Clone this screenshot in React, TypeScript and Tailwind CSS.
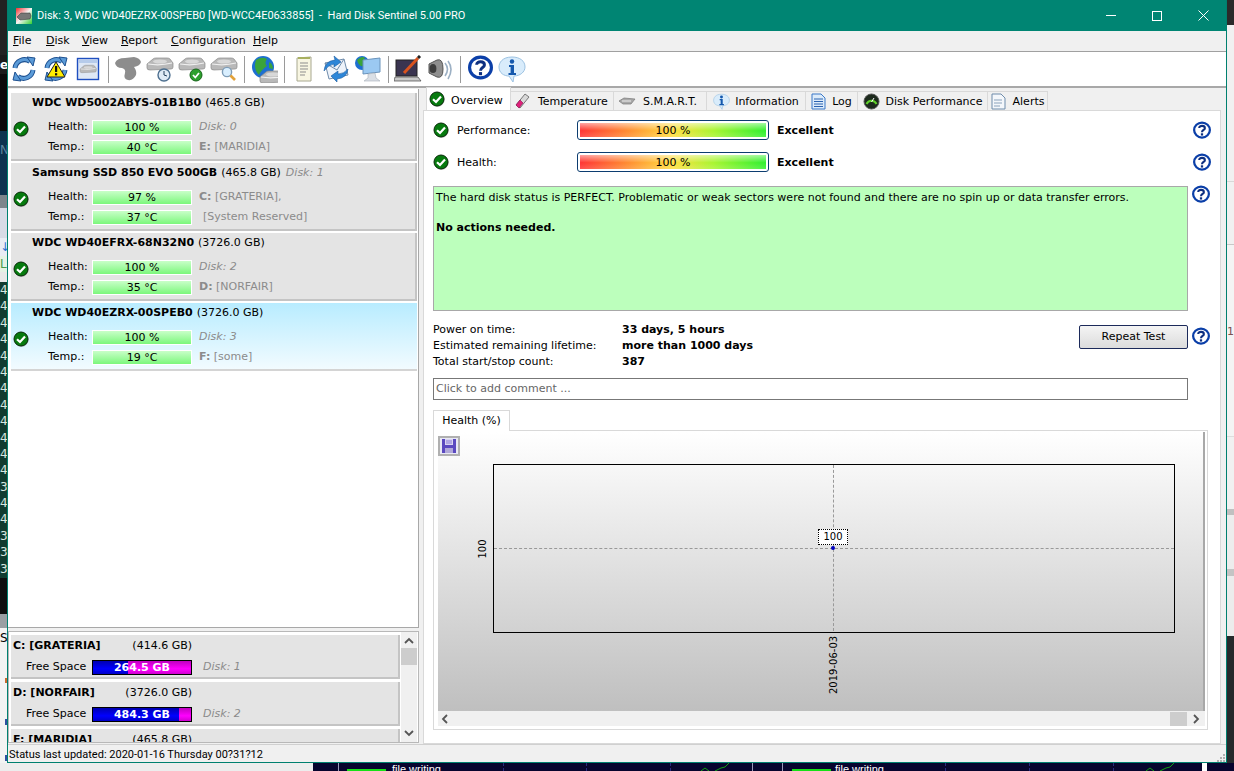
import React from "react";

// small icons
function Check({ size = 16 }: { size?: number }) {
  return (
    <svg width={size} height={size} viewBox="0 0 16 16" className="shrink-0">
      <circle cx="8.6" cy="8.8" r="7" fill="#00000040" />
      <circle cx="8" cy="8" r="7" fill="#067a0e" stroke="#062a08" strokeWidth="1" />
      <path d="M4 8.2 L7 11 L12 5.4" fill="none" stroke="#fff" strokeWidth="2.2" />
    </svg>
  );
}

function Help({ size = 18 }: { size?: number }) {
  return (
    <svg width={size} height={size} viewBox="0 0 24 24" className="shrink-0">
      <ellipse cx="12" cy="12" rx="10.5" ry="10" fill="#fff" stroke="#0b3fa8" strokeWidth="3" />
      <path d="M8.3 9.3 C8.3 5.6 15.8 5.6 15.8 9.5 C15.8 12 12 12 12 15" fill="none" stroke="#0d2f80" strokeWidth="2.8" />
      <rect x="10.5" y="16.4" width="3" height="3" fill="#0d2f80" />
    </svg>
  );
}

function Arcs({ dark = "#1c4f8f", light = "#5b9bd8" }: { dark?: string; light?: string }) {
  return (
    <g fill="none">
      <path d="M5 13 A9.5 9.5 0 0 1 20 6.5" stroke={dark} strokeWidth="5" />
      <path d="M23 15 A9.5 9.5 0 0 1 8 21.5" stroke={dark} strokeWidth="5" />
      <path d="M5 13 A9.5 9.5 0 0 1 20 6.5" stroke={light} strokeWidth="3" />
      <path d="M23 15 A9.5 9.5 0 0 1 8 21.5" stroke={light} strokeWidth="3" />
      <path d="M17 2 L25 3 L23 11 Z" fill={light} stroke={dark} />
      <path d="M11 26 L3 25 L5 17 Z" fill={light} stroke={dark} />
    </g>
  );
}

function GrayDisk({ y = 0, x = 0 }: { y?: number; x?: number }) {
  return (
    <g transform={`translate(${x} ${y})`}>
      <path d="M1 8 L7 3 Q8 2 10 2 L21 2 Q23 2 24 3 L27 7 L27 11 Q27 13 25 13 L4 14 Q1 14 1 12 Z" fill="#b9b9b9" stroke="#8a8a8a" strokeWidth="0.7" />
      <path d="M2 8 Q14 10 26 7" fill="none" stroke="#f0f0f0" strokeWidth="1.2" />
      <ellipse cx="14" cy="5.5" rx="7" ry="2" fill="#d8d8d8" />
    </g>
  );
}

function ToolIcon({ name }: { name: string }) {
  let body: React.ReactNode = null;
  if (name === "refresh") body = <Arcs />;
  if (name === "warn")
    body = (
      <>
        <Arcs />
        <path d="M14 7 L23 22 L5 22 Z" fill="#ffee00" stroke="#222" strokeWidth="1" />
        <rect x="13" y="11" width="2.2" height="6" fill="#111" />
        <rect x="13" y="18.2" width="2.2" height="2.2" fill="#111" />
      </>
    );
  if (name === "disk")
    body = (
      <>
        <rect x="3.5" y="3.5" width="21" height="21" fill="#dfe8f5" stroke="#1f4fc0" strokeWidth="1.4" />
        <rect x="5" y="5" width="18" height="3" fill="#b6cbea" />
        <g transform="translate(5.5 9) scale(0.62)">
          <GrayDisk />
        </g>
      </>
    );
  if (name === "blob")
    body = <path d="M1 8 Q3 3 11 3 L20 2 Q26 3 27 7 Q26 11 20 12 Q23 16 22 20 Q19 26 14 25 Q9 24 11 18 Q12 14 8 13 Q2 13 1 8 Z" fill="#8d8d8d" />;
  if (name === "clock")
    body = (
      <>
        <GrayDisk y={1} />
        <circle cx="18" cy="20" r="6" fill="#dfeaf5" stroke="#4d6f8f" strokeWidth="1.4" />
        <path d="M18 16 L18 20 L21 21" fill="none" stroke="#24405c" />
      </>
    );
  if (name === "okdisk")
    body = (
      <>
        <GrayDisk y={1} />
        <circle cx="18" cy="20" r="6" fill="#2ca02c" stroke="#17641a" />
        <path d="M15 20 L17.3 22.5 L21 18" fill="none" stroke="#fff" strokeWidth="1.8" />
      </>
    );
  if (name === "search")
    body = (
      <>
        <GrayDisk y={1} />
        <circle cx="17" cy="17" r="4.6" fill="#d9efff" stroke="#7e9db8" strokeWidth="1.4" />
        <path d="M20.5 20.5 L25 25" stroke="#e2a23a" strokeWidth="2.6" />
      </>
    );
  if (name === "globe")
    body = (
      <>
        <circle cx="13" cy="12" r="11" fill="#1d6fd0" />
        <path d="M6 5 Q12 1 17 4 Q14 8 17 11 Q11 15 9 20 Q3 14 6 5 Z" fill="#3aa43a" />
        <path d="M19 7 Q23 9 23 14 L19 13 Z" fill="#3aa43a" />
        <GrayDisk x={9} y={14} />
      </>
    );
  if (name === "note")
    body = (
      <>
        <path d="M7 3 L21 2 L21 26 L7 26 Z" fill="#f8f6e2" stroke="#a8a890" />
        <rect x="8" y="2" width="12" height="2" fill="#a8b060" />
        <path d="M10 8 H18 M10 11 H18 M10 14 H18 M10 17 H16 M10 20 H15" stroke="#8d8d8d" strokeWidth="1" />
      </>
    );
  if (name === "mail")
    body = (
      <>
        <path d="M3 8 L22 4 L26 20 L7 24 Z" fill="#eef3fa" stroke="#6f8cab" />
        <path d="M3 8 L15 15 L22 4" fill="none" stroke="#6f8cab" />
        <path d="M2 16 Q3 6 13 5 L12 1 L19 7 L12 12 L12 9 Q6 10 2 16 Z" fill="#2d86d8" stroke="#1a5a9f" strokeWidth="0.6" />
        <path d="M26 14 Q25 23 15 24 L15 27 L9 21 L16 16 L16 19 Q22 19 26 14 Z" fill="#2d86d8" stroke="#1a5a9f" strokeWidth="0.6" />
      </>
    );
  if (name === "net")
    body = (
      <>
        <circle cx="8" cy="8" r="7" fill="#1d6fd0" />
        <path d="M3 5 Q8 0 11 3 Q8 7 9 11 Q5 12 3 5 Z" fill="#3aa43a" />
        <path d="M9 5 L26 3 L26 17 L9 19 Z" fill="#9bc9f2" stroke="#6a93bb" />
        <path d="M14 19 L21 18 L22 23 L26 26 L10 26 L14 23 Z" fill="#dadfe5" stroke="#a8b0b8" strokeWidth="0.6" />
      </>
    );
  if (name === "monitor")
    body = (
      <>
        <rect x="2" y="5" width="21" height="16" fill="#3a3450" stroke="#222" />
        <path d="M1 22 L24 22 L27 26 L0 26 Z" fill="#c9c9c9" stroke="#444" strokeWidth="0.7" />
        <path d="M10 18 L24 3" stroke="#d9531e" strokeWidth="3" />
        <path d="M24 3 L26 1" stroke="#222" strokeWidth="3" />
      </>
    );
  if (name === "speaker")
    body = (
      <>
        <path d="M3 9 L11 5 Q17 3 17 14 Q17 24 11 22 L3 18 Z" fill="#8f8f8f" stroke="#555" />
        <ellipse cx="7" cy="13.5" rx="3.4" ry="4.6" fill="#3e3e3e" />
        <path d="M19 8 Q24 14 19 21 M22 6 Q28 14 22 24" fill="none" stroke="#9cb0c4" strokeWidth="1.6" />
      </>
    );
  if (name === "help") return <Help size={25} />;
  if (name === "info")
    body = (
      <>
        <path d="M14 2 C4 2 1 8 1 12 C1 18 6 21 11 21 L15 27 L16 21 C22 21 27 17 27 12 C27 6 22 2 14 2 Z" fill="#d9ecfb" stroke="#9cc2e2" />
        <circle cx="14" cy="6.5" r="2.2" fill="#1458ad" />
        <path d="M11 10 H16 V18 H18 V20 H10.5 V18 H12.6 V12 H11 Z" fill="#1458ad" />
      </>
    );
  return (
    <svg width="28" height="28" viewBox="0 0 28 28" className="shrink-0">
      {body}
    </svg>
  );
}

function TabIcon({ name }: { name: string }) {
  if (name === "temp")
    return (
      <svg width="18" height="18" viewBox="0 0 18 18">
        <path d="M3 13 L12 2 L16 5 L7 16 Z" fill="#d8d8d8" stroke="#777" />
        <path d="M3 13 L7 8 L10 11 L6 16 Z" fill="#e0207a" stroke="#8a1050" strokeWidth="0.6" />
      </svg>
    );
  if (name === "smart")
    return (
      <svg width="18" height="12" viewBox="0 0 18 12">
        <path d="M1 6 L6 3 L17 4 L13 9 L5 9 Z" fill="#a8a8a8" stroke="#777" strokeWidth="0.7" />
        <path d="M4 6 L13 6" stroke="#eee" />
      </svg>
    );
  if (name === "info")
    return (
      <svg width="17" height="17" viewBox="0 0 28 28">
        <path d="M14 2 C4 2 1 8 1 12 C1 18 6 21 11 21 L15 27 L16 21 C22 21 27 17 27 12 C27 6 22 2 14 2 Z" fill="#d9ecfb" stroke="#9cc2e2" />
        <circle cx="14" cy="6.5" r="2.4" fill="#1458ad" />
        <path d="M11 10 H16 V18 H18 V20 H10.5 V18 H12.6 V12 H11 Z" fill="#1458ad" />
      </svg>
    );
  if (name === "log")
    return (
      <svg width="15" height="17" viewBox="0 0 15 17">
        <path d="M1 1 H10 L14 5 V16 H1 Z" fill="#dcebfa" stroke="#3a78c8" />
        <path d="M3 6 H12 M3 8.5 H12 M3 11 H12 M3 13.5 H12" stroke="#2a62b0" />
      </svg>
    );
  if (name === "perf")
    return (
      <svg width="17" height="17" viewBox="0 0 17 17">
        <circle cx="8.5" cy="8.5" r="7.5" fill="#1d2a1d" stroke="#555" />
        <path d="M3.5 11 A5.5 5.5 0 0 1 13.5 11" fill="none" stroke="#5fd02a" strokeWidth="2" />
        <path d="M8.5 9 L11 5" stroke="#fff" />
      </svg>
    );
  if (name === "alerts")
    return (
      <svg width="15" height="17" viewBox="0 0 15 17">
        <path d="M1 1 H10 L14 5 V16 H1 Z" fill="#f4f7fb" stroke="#6f8cab" />
        <path d="M3 7 H11 M3 10 H11 M3 13 H9" stroke="#8aa2bb" />
      </svg>
    );
  return null;
}

type DiskInfo = {
  name: string;
  size: string;
  health: string;
  temp: string;
  healthNote: React.ReactNode;
  tempNote: React.ReactNode;
  nameNote?: string;
  selected?: boolean;
};

const muted = "text-[#8b8b8b]";

const disks: DiskInfo[] = [
  {
    name: "WDC WD5002ABYS-01B1B0",
    size: "(465.8 GB)",
    health: "100 %",
    temp: "40 °C",
    healthNote: <span className={`italic ${muted}`}>Disk: 0</span>,
    tempNote: (
      <span className={muted}>
        <b>E:</b> [MARIDIA]
      </span>
    ),
  },
  {
    name: "Samsung SSD 850 EVO 500GB",
    size: "(465.8 GB)",
    nameNote: "Disk: 1",
    health: "97 %",
    temp: "37 °C",
    healthNote: (
      <span className={muted}>
        <b>C:</b> [GRATERIA],
      </span>
    ),
    tempNote: <span className={`ml-1 ${muted}`}>[System Reserved]</span>,
  },
  {
    name: "WDC WD40EFRX-68N32N0",
    size: "(3726.0 GB)",
    health: "100 %",
    temp: "35 °C",
    healthNote: <span className={`italic ${muted}`}>Disk: 2</span>,
    tempNote: (
      <span className={muted}>
        <b>D:</b> [NORFAIR]
      </span>
    ),
  },
  {
    name: "WDC WD40EZRX-00SPEB0",
    size: "(3726.0 GB)",
    health: "100 %",
    temp: "19 °C",
    selected: true,
    healthNote: <span className={`italic ${muted}`}>Disk: 3</span>,
    tempNote: (
      <span className={muted}>
        <b>F:</b> [some]
      </span>
    ),
  },
];

function MiniBar({ text }: { text: string }) {
  return (
    <div className="flex h-[15px] w-[100px] items-center justify-center border border-white bg-[linear-gradient(to_bottom,#c8ffc8,#7cf77c)] leading-none">
      {text}
    </div>
  );
}

function DiskCard({ d }: { d: DiskInfo }) {
  return (
    <div
      className={
        d.selected
          ? "flex h-[68px] flex-col border-b-2 border-[#d4d4d4] bg-[linear-gradient(to_bottom,#b8ecff,#f2fbff)]"
          : "flex h-[68px] flex-col border-r-2 border-b-2 border-[#c4c4c4] bg-[#e4e4e4]"
      }
    >
      <div className="flex h-[21px] items-center pl-[21px] whitespace-nowrap">
        <b>{d.name}</b>
        <span className="ml-[4px]">{d.size}</span>
        {d.nameNote && <span className={`ml-[5px] italic ${muted}`}>{d.nameNote}</span>}
      </div>
      <div className="mt-[3px] flex">
        <div className="mt-[4px] ml-[2px] w-[35px]">
          <Check />
        </div>
        <div className="flex flex-col">
          <div className="flex h-[20px] items-center">
            <span className="w-[44px]">Health:</span>
            <MiniBar text={d.health} />
            <span className="ml-[7px]">{d.healthNote}</span>
          </div>
          <div className="flex h-[20px] items-center">
            <span className="w-[44px]">Temp.:</span>
            <MiniBar text={d.temp} />
            <span className="ml-[7px]">{d.tempNote}</span>
          </div>
        </div>
      </div>
    </div>
  );
}

function Volume({ name, size, free, disk, blue }: { name: string; size: string; free?: string; disk?: string; blue?: number }) {
  return (
    <div className="mb-[3px] flex h-[44px] shrink-0 flex-col border-r-2 border-b-2 border-[#c4c4c4] bg-[#e4e4e4]">
      <div className="flex h-[22px] w-[181px] items-center justify-between pl-[2px] whitespace-nowrap">
        <b>{name}</b>
        <span>{size}</span>
      </div>
      {free && (
        <div className="flex h-[20px] items-center pl-[15px]">
          <span className="w-[66px] whitespace-nowrap">Free Space</span>
          <div className="relative flex h-[15px] w-[100px] border border-black bg-[linear-gradient(to_bottom,#c000c0,#ff00ff_60%,#d000d0)]">
            <div className="h-full bg-[linear-gradient(to_bottom,#0000b0,#0000ff_60%,#0000c8)]" style={{ width: blue }} />
            <span className="absolute inset-0 flex items-center justify-center font-bold leading-none text-white">{free}</span>
          </div>
          <span className={`ml-[11px] italic ${muted}`}>{disk}</span>
        </div>
      )}
    </div>
  );
}

function GaugeRow({ label }: { label: string }) {
  return (
    <div className="flex h-[20px] items-center">
      <div className="flex w-[144px] items-center gap-[8px]">
        <Check />
        <span className="pt-[3px]">{label}</span>
      </div>
      <div className="h-[20px] w-[192px] rounded-[3px] border border-[#0c3d70] bg-white p-[2px]">
        <div className="flex h-full items-center justify-center bg-[linear-gradient(to_bottom,rgba(255,255,255,0.55),rgba(255,255,255,0)_55%,rgba(255,255,255,0.15)),linear-gradient(to_right,#ff3434,#ff8a30_25%,#ffe040_50%,#a8f530_72%,#30f030)] leading-none">
          100 %
        </div>
      </div>
      <b className="ml-[8px] pt-[2px]">Excellent</b>
      <div className="mr-[9px] ml-auto">
        <Help />
      </div>
    </div>
  );
}

const tabs = [
  { label: "Temperature", icon: "temp", cls: "w-[103px] justify-start gap-[7px] pl-[2px]" },
  { label: "S.M.A.R.T.", icon: "smart", cls: "w-[93px] justify-start gap-[7px] pl-[4px]" },
  { label: "Information", icon: "info", cls: "w-[99px] justify-center gap-[5px]" },
  { label: "Log", icon: "log", cls: "w-[52px] justify-center gap-[6px]" },
  { label: "Disk Performance", icon: "perf", cls: "w-[130px] justify-center gap-[6px]" },
  { label: "Alerts", icon: "alerts", cls: "w-[60px] justify-center gap-[7px]" },
];

const menu = [
  ["F", "ile", "w-[33px]"],
  ["D", "isk", "w-[36px]"],
  ["V", "iew", "w-[39px]"],
  ["R", "eport", "w-[50px]"],
  ["C", "onfiguration", "w-[82px]"],
  ["H", "elp", "w-[40px]"],
];

const toolbar = [
  ["refresh", "warn", "disk"],
  ["blob", "clock", "okdisk", "search"],
  ["globe"],
  ["note", "mail", "net"],
  ["monitor", "speaker"],
  ["help", "info"],
];

const leftBand = ["4", "4", "4", "4", "4", "4", "4", "4", "4", "4", "4", "4", "3", "4", "4", "3", "3", "3"];

function LeftStrip() {
  return (
    <div className="flex h-full w-[7px] shrink-0 flex-col overflow-hidden text-[12px] text-white">
      <div className="h-[55px] bg-[#222222]" />
      <div className="flex h-[19px] items-center bg-[#1b1b1b] font-bold">e</div>
      <div className="h-[57px] bg-[#0b0b0b]" />
      <div className="h-[64px] bg-[#0d3350] pt-[11px] leading-[16px] text-[#5f87a0]">N</div>
      <div className="h-[13px] bg-[#7d868c]" />
      <div className="h-[30px] bg-[#d8dbe6]" />
      <div className="flex h-[18px] items-center bg-[#e8ecf4] text-[#2a72d0]">↓</div>
      <div className="flex h-[16px] items-center bg-[#e4f2e4] text-[#4a9a4a]">L</div>
      <div className="h-[10px] bg-[#e8e8e8]" />
      <div className="flex h-[296px] flex-col bg-[#123c30] text-[#d8e8e0]">
        {leftBand.map((n, i) => (
          <span key={i} className="h-[16.4px] leading-[16px]">
            {n}
          </span>
        ))}
      </div>
      <div className="h-[36px] bg-[#0e0e0e]" />
      <div className="h-[14px] bg-[#9a9fa3]" />
      <div className="flex h-[20px] items-center bg-[#f3f3f3] text-black">S</div>
      <div className="flex flex-1 flex-col items-end bg-[#f3f3f3]">
        <div className="mt-[30px] h-[5px] w-[2px] bg-[#c86a30]" />
        <div className="mt-[36px] h-[6px] w-[2px] bg-[#3050a0]" />
        <div className="mt-[30px] h-[6px] w-[2px] bg-[#3050a0]" />
      </div>
    </div>
  );
}

function RightStrip() {
  return (
    <div className="flex h-full w-[7px] shrink-0 flex-col overflow-hidden">
      <div className="h-[25px] bg-[#2a2a2a]" />
      <div className="h-[157px] border-b border-[#d8d8d8] bg-[#f1f1f1]" />
      <div className="h-[63px] border-b border-[#c8c8c8] bg-[#f1f1f1]" />
      <div className="h-[192px] border-b border-[#dddddd] bg-[#f4f4f4] pt-[81px] text-[11px] leading-[12px] text-[#7a5050]">1</div>
      <div className="h-[72px] bg-[#f1f1f1]" />
      <div className="h-[6px] bg-[#c0c0c0]" />
      <div className="h-[54px] bg-[#ededed]" />
      <div className="h-[7px] bg-[#c4c4c4]" />
      <div className="h-[60px] bg-[#ececec]" />
      <div className="flex-1 bg-[#252a2c]" />
    </div>
  );
}

function BottomStrip() {
  return (
    <div className="flex h-[8px] shrink-0 overflow-hidden font-['Liberation_Sans',sans-serif] text-[11px] leading-[11px] text-white">
      <div className="w-[313px] shrink-0 bg-[#ededed]" />
      <div className="flex flex-1 items-start bg-[#07042e]">
        <div className="ml-[25px] h-full w-[1px] bg-[#9a9ab8]" />
        <div className="mt-[6px] ml-[8px] h-[2px] w-[39px] bg-[#16e016]" />
        <span className="mt-[1px] ml-[6px] w-[45px] whitespace-nowrap">file writing</span>
        <div className="ml-[66px] h-full border-l border-dashed border-[#2a2a80]" />
        <div className="ml-[82px] h-full border-l border-dashed border-[#2a2a80]" />
        <div className="ml-[83px] h-full border-l border-dashed border-[#2a2a80]" />
        <svg width="30" height="8" viewBox="0 0 30 8" className="ml-[30px] shrink-0">
          <path d="M0 8 L4 5 L8 8 M14 8 L20 5 L24 4 L28 0" fill="none" stroke="#12a012" />
        </svg>
        <div className="ml-[21px] h-full w-[1px] bg-[#9a9ab8]" />
        <div className="ml-[29px] h-full w-[1px] bg-[#9a9ab8]" />
        <div className="mt-[6px] ml-[9px] h-[2px] w-[39px] bg-[#16e016]" />
        <span className="mt-[1px] ml-[4px] w-[45px] whitespace-nowrap">file writing</span>
        <div className="ml-[65px] h-full border-l border-dashed border-[#2a2a80]" />
        <div className="ml-[83px] h-full border-l border-dashed border-[#2a2a80]" />
        <div className="ml-[83px] h-full border-l border-dashed border-[#2a2a80]" />
        <svg width="30" height="8" viewBox="0 0 30 8" className="ml-[32px] shrink-0">
          <path d="M0 8 L4 5 L8 8 M14 8 L20 5 L24 4 L28 0" fill="none" stroke="#12a012" />
        </svg>
        <div className="ml-[26px] h-full w-[5px] bg-white" />
      </div>
    </div>
  );
}

function Chart() {
  return (
    <div className="flex flex-col">
      <div className="flex h-[20px]">
        <div className="z-10 flex h-[21px] w-[77px] items-center justify-center border border-b-0 border-[#d9d9d9] bg-white">
          Health (%)
        </div>
      </div>
      <div className="flex h-[300px] w-[775px] flex-col border border-[#d9d9d9] bg-white pt-[1px] pr-[2px] pb-[3px] pl-[4px]">
        <div className="relative h-[280px] border-r-2 border-[#a8a8a8] bg-[linear-gradient(to_bottom,#ffffff,#bfbfbf)] pt-[4px]">
          <div className="flex h-[20px] w-[22px] items-center justify-center border-2 border-[#b0b0b0] bg-[#e8e8f4]">
            <svg width="16" height="16" viewBox="0 0 16 16">
              <path d="M1 1 H15 V15 H1 Z" fill="#5a48c0" />
              <rect x="4" y="1" width="8" height="6" fill="#d8d4f0" />
              <path d="M5 3 H11 M5 5 H11" stroke="#8878d8" />
              <rect x="4" y="10" width="8" height="5" fill="#b0a8d8" />
            </svg>
          </div>
          <div className="mt-[8px] ml-[55px] h-[169px] w-[682px] border border-black" />
          {/* lines, point and labels sit over the plot */}
          <div className="absolute top-[33px] bottom-[80px] left-[395px] border-l border-dashed border-[#999999]" />
          <div className="absolute top-[116px] left-[56px] w-[680px] border-t border-dashed border-[#999999]" />
          <div className="absolute top-[114px] left-[393px] h-[4px] w-[4px] rounded-full bg-[#0000c0]" />
          <div className="absolute top-[97px] left-[380px] flex h-[16px] w-[30px] items-center justify-center border border-dotted border-black bg-white text-[10px] leading-none">
            100
          </div>
          <span className="absolute top-[112px] left-[34px] w-[22px] -rotate-90 text-center text-[10px] leading-none">100</span>
          <span className="absolute top-[229px] left-[368px] w-[56px] -rotate-90 text-center text-[10px] leading-none whitespace-nowrap">2019-06-03</span>
        </div>
        <div className="flex h-[15px] items-center border-r-2 border-transparent bg-[#f0f0f0] pr-[2px] pl-[2px]">
          <svg width="10" height="10" viewBox="0 0 10 10">
            <path d="M7 1 L3 5 L7 9" fill="none" stroke="#555" strokeWidth="1.8" />
          </svg>
          <div className="ml-auto h-[14px] w-[17px] bg-[#cdcdcd]" />
          <svg width="10" height="10" viewBox="0 0 10 10" className="ml-[4px]">
            <path d="M3 1 L7 5 L3 9" fill="none" stroke="#555" strokeWidth="1.8" />
          </svg>
        </div>
      </div>
    </div>
  );
}

export default function App() {
  return (
    <div className="flex h-[771px] w-[1234px] flex-col overflow-hidden bg-[#0a0a0a] font-['DejaVu_Sans',sans-serif] text-[11px] text-black">
      <div className="flex h-[763px] shrink-0">
        <LeftStrip />
        <div className="flex w-[1220px] shrink-0 flex-col border-x border-b border-[#00806f] bg-[#f0f0f0]">
          {/* title bar */}
          <div className="flex h-[31px] shrink-0 items-center bg-[#008573] text-white">
            <svg width="16" height="16" viewBox="0 0 16 16" className="ml-[8px]">
              <defs>
                <linearGradient id="ttl" x1="0" y1="0" x2="1" y2="1">
                  <stop offset="0" stopColor="#f03030" />
                  <stop offset="0.5" stopColor="#f4f4f4" />
                  <stop offset="1" stopColor="#30d030" />
                </linearGradient>
              </defs>
              <rect width="16" height="16" fill="url(#ttl)" />
              <path d="M1 9 L5 5 L14 5 L15 8 L14 11 L4 12 Z" fill="#777" stroke="#333" strokeWidth="0.5" />
            </svg>
            <span className="mt-[1px] ml-[5px] font-['Roboto',sans-serif] text-[11px] whitespace-nowrap">Disk: 3, WDC WD40EZRX-00SPEB0 [WD-WCC4E0633855]&nbsp; -&nbsp; Hard Disk Sentinel 5.00 PRO</span>
            <div className="ml-auto flex items-center">
              <div className="flex w-[46px] justify-center">
                <div className="h-[1px] w-[10px] bg-white" />
              </div>
              <div className="flex w-[46px] justify-center">
                <div className="h-[10px] w-[10px] border border-white" />
              </div>
              <div className="flex w-[46px] justify-center">
                <svg width="11" height="11" viewBox="0 0 11 11">
                  <path d="M0.5 0.5 L10.5 10.5 M10.5 0.5 L0.5 10.5" stroke="#fff" />
                </svg>
              </div>
            </div>
          </div>
          {/* menu */}
          <div className="flex h-[21px] shrink-0 items-center border-b border-[#a0a0a0] pt-[1px] pl-[5px]">
            {menu.map(([u, rest, w]) => (
              <span key={u} className={w}>
                <span className="underline">{u}</span>
                {rest}
              </span>
            ))}
          </div>
          {/* toolbar */}
          <div className="flex h-[36px] shrink-0 items-center border-b-2 border-[#a8a8a8] bg-white">
            {toolbar.map((group, i) => (
              <React.Fragment key={i}>
                {i > 0 && <div className="mr-[3px] ml-[4px] h-[27px] w-[1px] bg-[#9a9a9a]" />}
                <div className="flex">
                  {group.map((ic) => (
                    <div key={ic} className="flex w-[32px] justify-center">
                      <ToolIcon name={ic} />
                    </div>
                  ))}
                </div>
              </React.Fragment>
            ))}
          </div>
          {/* main */}
          <div className="flex min-h-0 flex-1">
            <div className="flex w-[411px] shrink-0 flex-col">
              <div className="mt-[1px] flex h-[539px] flex-col gap-[2px] border-r border-b border-[#a8a8a8] bg-white pt-[4px] pr-[1px] pl-[3px]">
                {disks.map((d) => (
                  <DiskCard key={d.name} d={d} />
                ))}
              </div>
              <div className="mt-[3px] flex h-[112px] border border-[#b8b8b8] bg-white pl-[2px]">
                <div className="flex h-full w-[389px] flex-col overflow-hidden pt-[3px]">
                  <Volume name="C: [GRATERIA]" size="(414.6 GB)" free="264.5 GB" disk="Disk: 1" blue={35} />
                  <Volume name="D: [NORFAIR]" size="(3726.0 GB)" free="484.3 GB" disk="Disk: 2" blue={86} />
                  <Volume name="F: [MARIDIA]" size="(465.8 GB)" />
                </div>
                <div className="ml-[1px] flex w-[16px] flex-col items-center bg-[#f0f0f0] py-[5px]">
                  <svg width="10" height="8" viewBox="0 0 10 8">
                    <path d="M1 6 L5 2 L9 6" fill="none" stroke="#555" strokeWidth="1.8" />
                  </svg>
                  <div className="mt-[3px] h-[17px] w-full bg-[#cdcdcd]" />
                  <svg width="10" height="8" viewBox="0 0 10 8" className="mt-auto">
                    <path d="M1 2 L5 6 L9 2" fill="none" stroke="#555" strokeWidth="1.8" />
                  </svg>
                </div>
              </div>
            </div>
            <div className="ml-[4px] flex min-w-0 flex-1 flex-col">
              <div className="flex h-[22px] shrink-0 items-end pl-[3px]">
                <div className="z-10 flex h-[23px] w-[85px] items-center gap-[6px] border border-b-0 border-[#d9d9d9] bg-white pl-[2px]">
                  <Check />
                  <span className="pt-[5px]">Overview</span>
                </div>
                {tabs.map((t) => (
                  <div key={t.label} className={`flex h-[19px] items-center border-t border-r border-[#d9d9d9] bg-[#f0f0f0] whitespace-nowrap ${t.cls}`}>
                    <TabIcon name={t.icon} />
                    <span className="pt-[2px]">{t.label}</span>
                  </div>
                ))}
              </div>
              <div className="mr-[5px] flex h-[634px] flex-col border border-[#d9d9d9] bg-white pt-[9px] pl-[9px]">
                <GaugeRow label="Performance:" />
                <div className="mt-[12px]">
                  <GaugeRow label="Health:" />
                </div>
                <div className="mt-[14px] flex">
                  <div className="h-[125px] w-[755px] border border-[#a8a8a8] bg-[#bcffbc] px-[2px] pt-[4px]">
                    <p className="leading-[14px]">The hard disk status is PERFECT. Problematic or weak sectors were not found and there are no spin up or data transfer errors.</p>
                    <p className="mt-[16px] leading-[14px] font-bold">No actions needed.</p>
                  </div>
                  <div className="mt-[-1px] ml-[4px]">
                    <Help />
                  </div>
                </div>
                <div className="mt-[11px] flex h-[48px] items-start">
                  <div className="grid w-[646px] grid-cols-[189px_auto] leading-[16px]">
                    <span>Power on time:</span>
                    <b>33 days, 5 hours</b>
                    <span>Estimated remaining lifetime:</span>
                    <b>more than 1000 days</b>
                    <span>Total start/stop count:</span>
                    <b>387</b>
                  </div>
                  <div className="mt-[3px] flex h-[24px] w-[109px] items-center justify-center rounded-[2px] border border-[#1c2a5a] bg-[linear-gradient(to_bottom,#f4f4f4,#dcdcdc)]">
                    Repeat Test
                  </div>
                  <div className="mt-[5px] ml-[4px]">
                    <Help />
                  </div>
                </div>
                <div className="mt-[8px] flex h-[22px] w-[755px] items-center border border-[#777] bg-white pl-[2px] text-[#666]">
                  Click to add comment ...
                </div>
                <div className="mt-[10px]">
                  <Chart />
                </div>
              </div>
            </div>
          </div>
          {/* status bar */}
          <div className="relative flex h-[18px] shrink-0 items-center border-t border-[#d0d0d0] pt-[3px] pl-[1px] font-['Roboto',sans-serif] text-[11px] whitespace-nowrap">
            Status last updated: 2020-01-16 Thursday 00?31?12
            <svg width="10" height="10" viewBox="0 0 10 10" className="absolute right-0 bottom-0">
              <path d="M7 2 H9 V4 H7 Z M4 5 H6 V7 H4 Z M7 5 H9 V7 H7 Z M1 8 H3 V10 H1 Z M4 8 H6 V10 H4 Z M7 8 H9 V10 H7 Z" fill="#b0b0b0" />
            </svg>
          </div>
        </div>
        <RightStrip />
      </div>
      <BottomStrip />
    </div>
  );
}
